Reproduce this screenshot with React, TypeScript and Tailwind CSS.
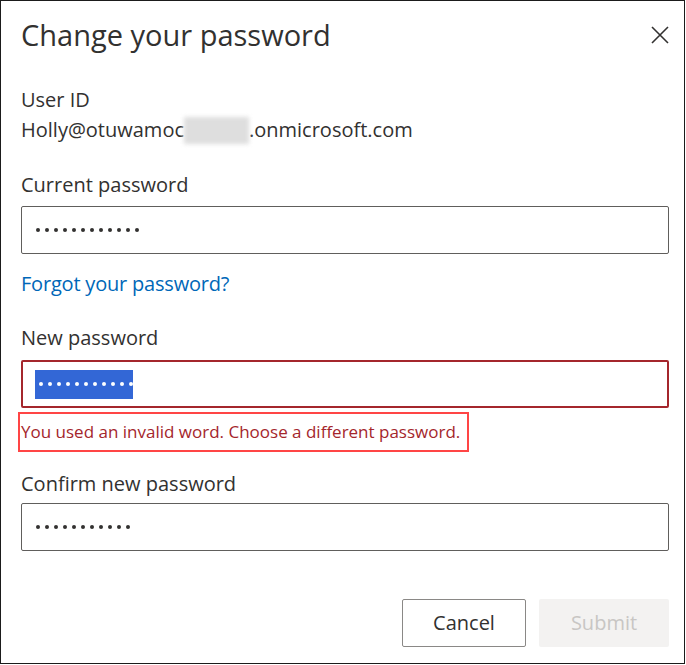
import React from "react";

const Dots = ({ count, light }: { count: number; light?: boolean }) => (
    <div className="flex gap-[5px]">
        {Array.from({ length: count }).map((_, i) => (
            <span
                key={i}
                className={
                    light
                        ? "block w-[4px] h-[4px] rounded-full bg-white"
                        : "block w-[4px] h-[4px] rounded-full bg-[#323130]"
                }
            />
        ))}
    </div>
);

export default function App() {
    return (
        <div className="w-[685px] h-[664px] border border-[#1b1b1b] bg-white text-[#323130] font-['Open_Sans',sans-serif] overflow-hidden">
            <div className="pt-[15px] pl-[20px] pr-[15px]">
                {/* header */}
                <div className="flex items-center justify-between h-[38px]">
                    <h1 className="text-[29px] leading-[38px]">Change your password</h1>
                    <button className="w-[22px] h-[22px] flex items-center justify-end text-[#323130]">
                        <svg width="18" height="18" viewBox="0 0 18 18" fill="none">
                            <path d="M1 1L17 17M17 1L1 17" stroke="currentColor" strokeWidth="1.6" />
                        </svg>
                    </button>
                </div>

                {/* user id */}
                <div className="mt-[31px] text-[20px] leading-[30px]">
                    <div>User ID</div>
                    <div className="flex items-center">
                        <span>Holly@otuwamoc</span>
                        <span className="inline-block w-[65px] h-[27px] bg-[#dedede] blur-[2px]" />
                        <span>.onmicrosoft.com</span>
                    </div>
                </div>

                {/* current password */}
                <label className="block mt-[25px] text-[20px] leading-[30px]">Current password</label>
                <div className="mt-[6px] h-[48px] border border-[#605e5c] rounded-[2px] flex items-center pl-[14px]">
                    <Dots count={12} />
                </div>
                <a className="block mt-[15px] text-[20px] leading-[30px] text-[#0067b8] tracking-[-0.2px]">
                    Forgot your password?
                </a>

                {/* new password */}
                <label className="block mt-[24px] text-[20px] leading-[30px]">New password</label>
                <div className="mt-[7px] h-[48px] border-2 border-[#a4262c] rounded-[2px] flex items-center pl-[12px]">
                    <div className="bg-[#3367d6] h-[29px] w-[98px] flex items-center pl-[4px]">
                        <Dots count={11} light />
                    </div>
                </div>
                <div className="-ml-[3px] mt-[4px] w-[451px] h-[40px] border-2 border-[#ff4545] flex items-center pl-[1px]">
                    <span className="text-[17px] leading-[22px] text-[#a4262c]">
                        You used an invalid word. Choose a different password.
                    </span>
                </div>

                {/* confirm password */}
                <label className="block mt-[17px] text-[20px] leading-[30px]">Confirm new password</label>
                <div className="mt-[4px] h-[48px] border border-[#605e5c] rounded-[2px] flex items-center pl-[14px]">
                    <Dots count={11} />
                </div>

                {/* actions */}
                <div className="mt-[48px] flex justify-end gap-[13px]">
                    <button className="w-[124px] h-[48px] border border-[#8a8886] rounded-[2px] text-[20px] text-[#323130]">
                        Cancel
                    </button>
                    <button className="w-[130px] h-[48px] rounded-[2px] bg-[#f3f2f1] text-[20px] text-[#c8c6c4]">
                        Submit
                    </button>
                </div>
            </div>
        </div>
    );
}
